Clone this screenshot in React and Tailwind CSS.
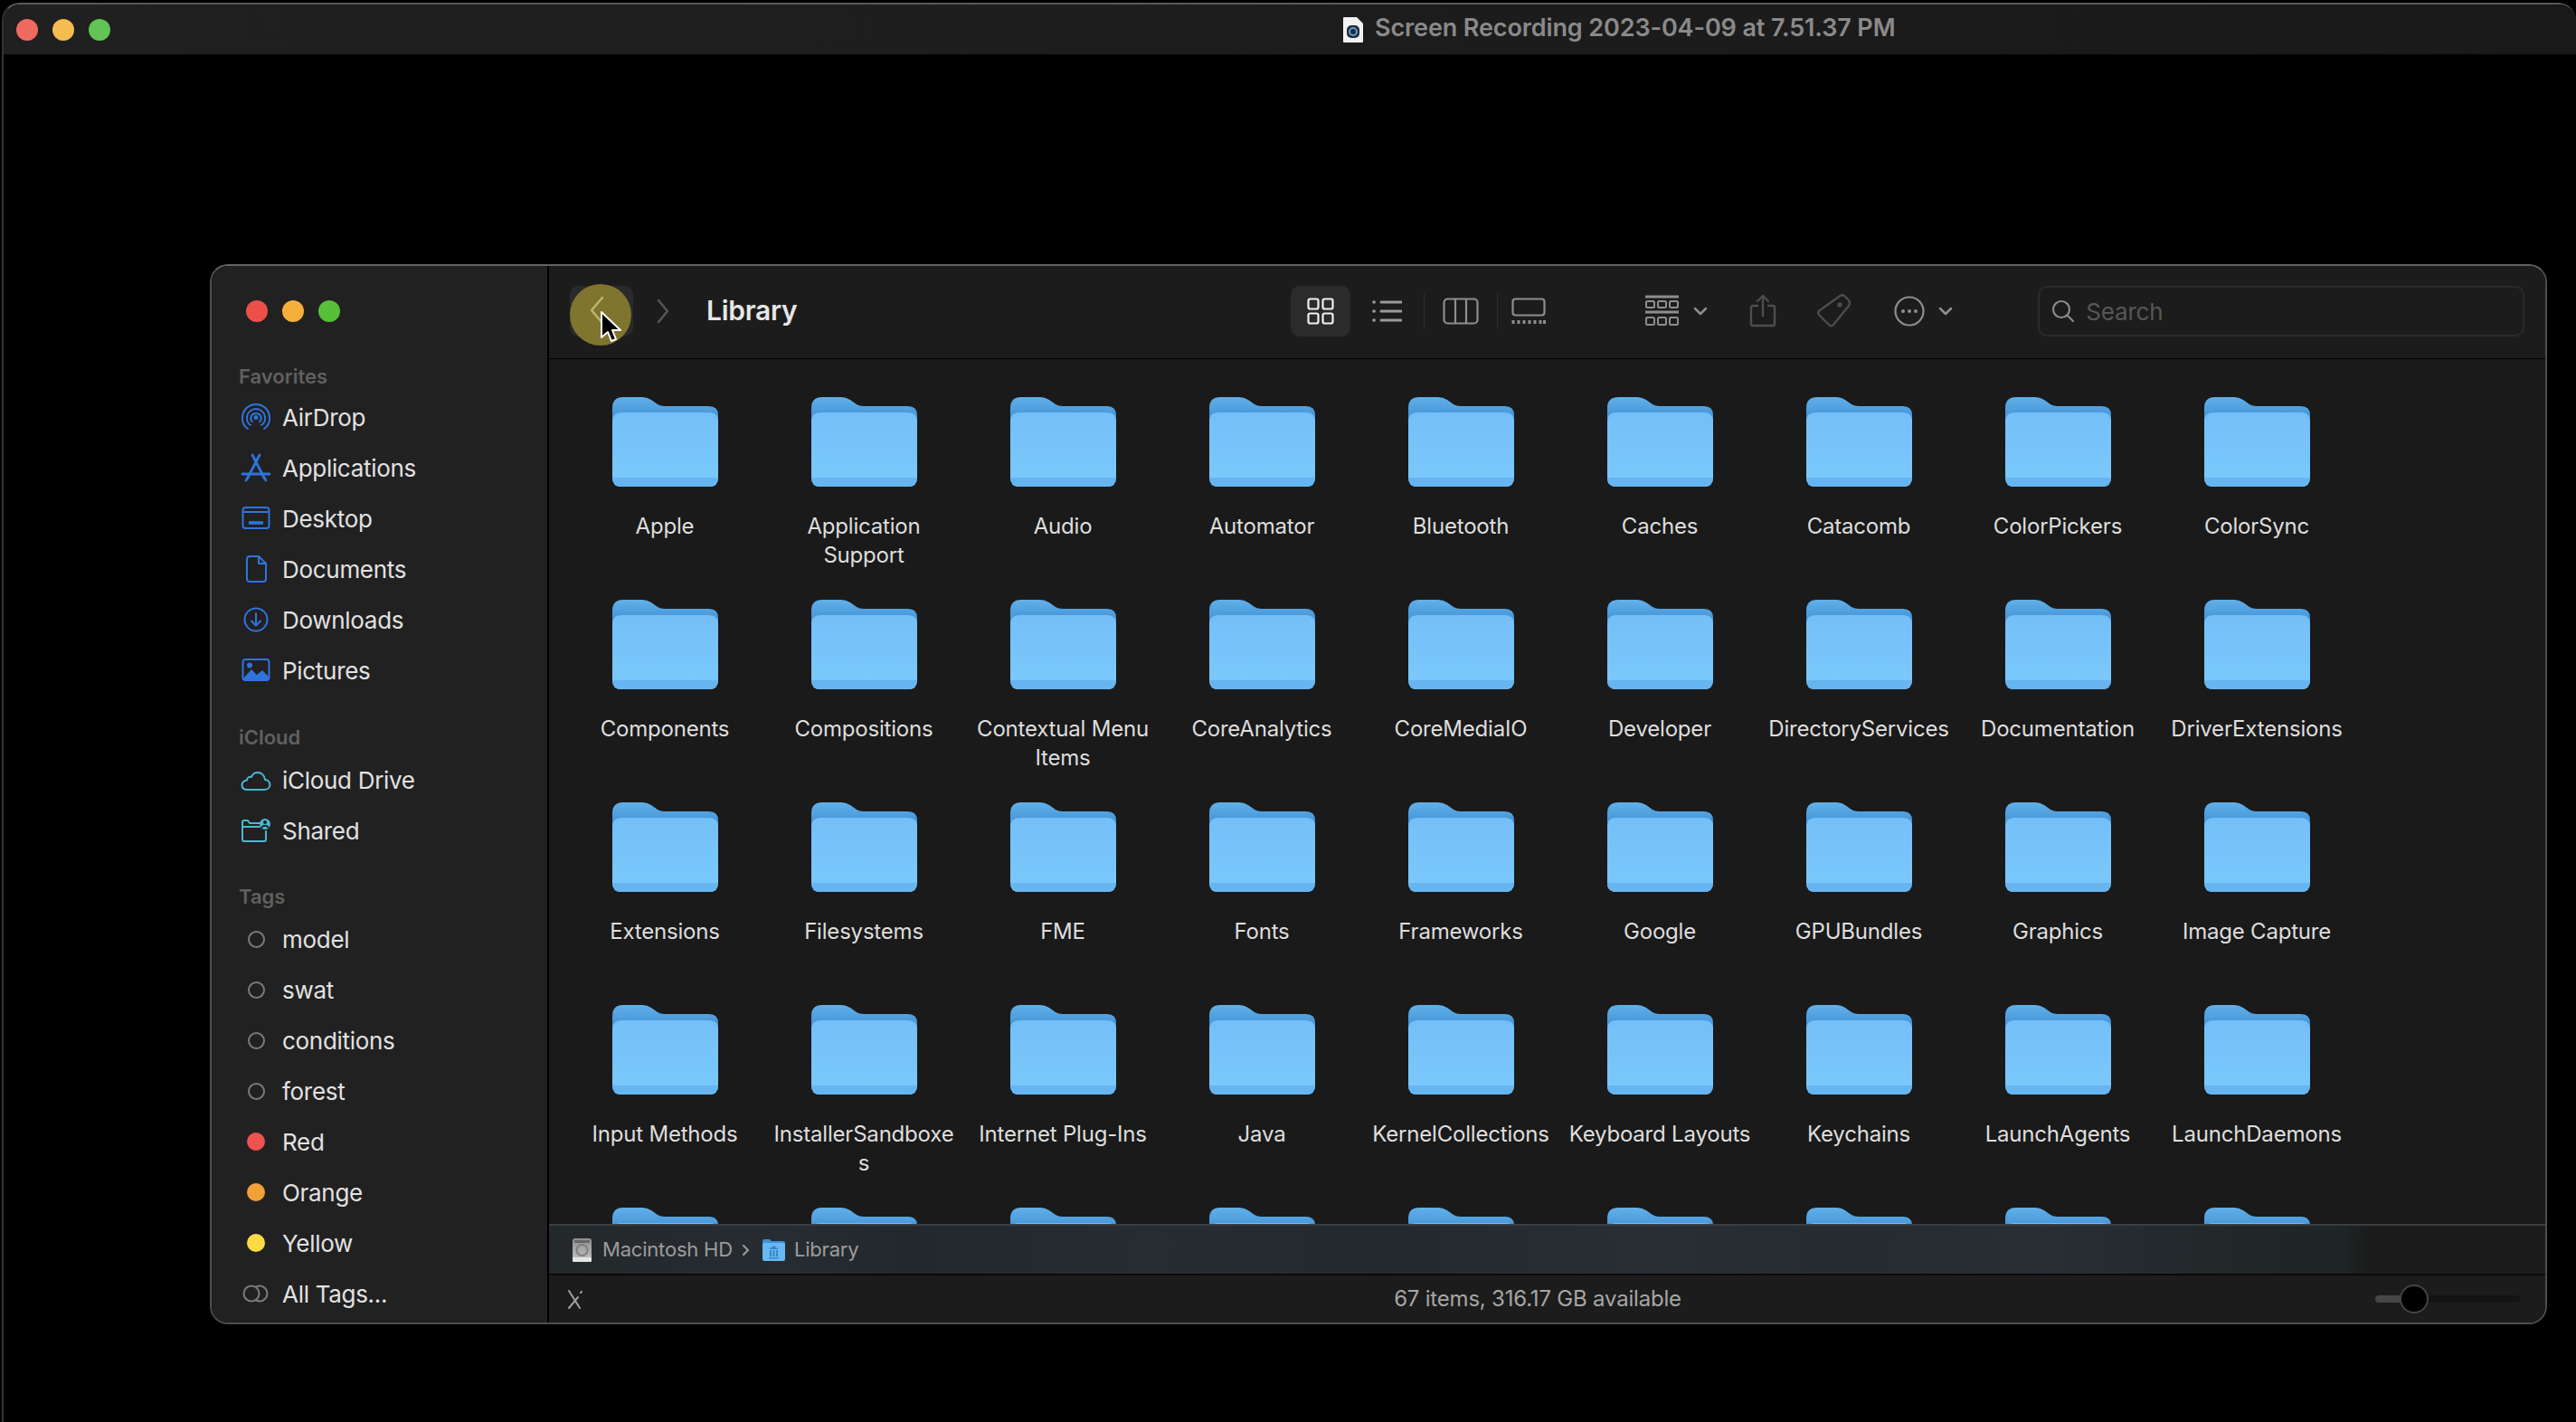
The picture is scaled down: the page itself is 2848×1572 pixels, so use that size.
const FONT = "font-['Inter','Liberation_Sans',sans-serif]";

const rows = [
  ["Apple", "Application\nSupport", "Audio", "Automator", "Bluetooth", "Caches", "Catacomb", "ColorPickers", "ColorSync"],
  ["Components", "Compositions", "Contextual Menu\nItems", "CoreAnalytics", "CoreMediaIO", "Developer", "DirectoryServices", "Documentation", "DriverExtensions"],
  ["Extensions", "Filesystems", "FME", "Fonts", "Frameworks", "Google", "GPUBundles", "Graphics", "Image Capture"],
  ["Input Methods", "InstallerSandboxe\ns", "Internet Plug-Ins", "Java", "KernelCollections", "Keyboard Layouts", "Keychains", "LaunchAgents", "LaunchDaemons"],
  ["", "", "", "", "", "", "", "", ""],
];

function Folder() {
  return (
    <svg width="117" height="99" viewBox="0 0 117 99" className="block">
      <defs>
        <linearGradient id="fb" x1="0" y1="0" x2="0" y2="1">
          <stop offset="0" stopColor="#62b0e8" />
          <stop offset="0.45" stopColor="#4394d8" />
          <stop offset="1" stopColor="#4394d8" />
        </linearGradient>
        <linearGradient id="ff" x1="0" y1="0" x2="0" y2="1">
          <stop offset="0" stopColor="#74bff7" />
          <stop offset="1" stopColor="#7bc9fd" />
        </linearGradient>
      </defs>
      <path d="M0 12Q0 0 12 0H33Q38 0 43 3L50 8Q53 10 58 10H107Q117 10 117 20V50H0Z" fill="url(#fb)" />
      <path d="M0 27Q0 17 10 17H107Q117 17 117 27V89Q117 99 107 99H10Q0 99 0 89Z" fill="url(#ff)" />
      <path d="M0 89H117Q117 99 107 99H10Q0 99 0 89Z" fill="#66b5f0" />
    </svg>
  );
}

function FolderCell({ name }) {
  return (
    <div className="flex h-[224px] w-[220px] flex-col items-center">
      <Folder />
      <div className="mt-[28px] whitespace-pre text-center text-[24px] leading-[32px] tracking-[-0.2px] text-[#dedede]">{name}</div>
    </div>
  );
}

const B = "#2f74dc";
const C = "#4db6d2";
const sv = { width: 36, height: 36, viewBox: "0 0 36 36", fill: "none", strokeLinecap: "round", strokeLinejoin: "round" };

const IconAirDrop = () => (
  <svg {...sv} stroke={B} strokeWidth="2">
    <path d="M9 31C4.500 28 2.500 23.500 3 18C3.500 10 10 4 18 4S32.500 10 33 18C33.500 23.500 31.500 28 27 31" />
    <path d="M12 27C9 25 7.500 21.500 8 18C8.500 13 13 9 18 9S27.500 13 28 18C28.500 21.500 27 25 24 27" />
    <path d="M14 23C12.500 22 12 20 12.500 18C13 15.500 15.500 14 18 14S23 15.500 23.500 18C24 20 23.500 22 22 23" />
    <circle cx="18" cy="18.500" r="1.500" fill={B} />
  </svg>
);
const IconApps = () => (
  <svg {...sv} stroke={B} strokeWidth="2.800">
    <path d="M14 4L27 29M22 4L9 29" />
    <path d="M3 25H33" />
    <path d="M7 32L9 29M29 32L27 29" />
  </svg>
);
const IconDesktop = () => (
  <svg {...sv} stroke={B} strokeWidth="2">
    <rect x="3.500" y="6" width="29" height="23" rx="3" />
    <path d="M4 11H32" />
    <path d="M10 23H26" strokeWidth="3.600" strokeLinecap="butt" />
  </svg>
);
const IconDoc = () => (
  <svg {...sv} stroke={B} strokeWidth="2">
    <path d="M11 4H21L29 12V29Q29 32 26 32H11Q8 32 8 29V7Q8 4 11 4Z" />
    <path d="M21 4V12H29" />
  </svg>
);
const IconDown = () => (
  <svg {...sv} stroke={B} strokeWidth="2">
    <circle cx="18" cy="18" r="12.500" />
    <path d="M18 11V24M13 19.500L18 24.500L23 19.500" />
  </svg>
);
const IconPics = () => (
  <svg {...sv}>
    <rect x="3.500" y="6" width="29" height="23" rx="3" stroke={B} strokeWidth="2" />
    <path d="M4 27L13 17L19 23L25 18L32 25V29H4Z" fill={B} />
    <circle cx="11" cy="12.500" r="3" fill={B} />
  </svg>
);
const IconCloud = () => (
  <svg {...sv} stroke={C} strokeWidth="2">
    <path d="M9 29H27C31 29 33.500 26.500 33.500 23.500C33.500 20.500 31 18 28 18C27.500 13 24 10 20 10C16.500 10 14 12 13 15C11 14 8 15.500 8 18.500C5 19 2.500 21 2.500 24C2.500 27 5 29 9 29Z" />
  </svg>
);
const IconShared = () => (
  <svg {...sv} stroke={C} strokeWidth="2">
    <path d="M24 10H11L9 7H5Q3 7 3 9V28Q3 30 5 30H27Q29 30 29 28V19" />
    <path d="M3 14H22" />
    <circle cx="28" cy="11" r="6" fill={C} stroke="none" />
    <circle cx="28" cy="9" r="2" fill="#212121" stroke="none" />
    <path d="M24.500 14.500Q28 11 31.500 14.500" stroke="#212121" strokeWidth="2" />
  </svg>
);
const IconAllTags = () => (
  <svg {...sv} stroke="#7c7c7c" strokeWidth="2">
    <circle cx="22" cy="18" r="8.500" />
    <circle cx="13" cy="18" r="8.500" fill="#212121" />
  </svg>
);

const Dot = ({ c }) => <span className={"h-[20px] w-[20px] rounded-full " + c} />;
const Ring = () => <span className="h-[19px] w-[19px] rounded-full border-2 border-[#7a7a7a]" />;

function Item({ icon, label }) {
  return (
    <div className="flex h-[56px] items-center">
      <span className="flex w-[78px] justify-center pl-[20px]">{icon}</span>
      <span className="text-[26px] tracking-[-0.3px] text-[#e2e2e2]">{label}</span>
    </div>
  );
}

function Lights({ a, b, c }) {
  return (
    <div className="flex items-center gap-[16px]">
      <span className={"h-[24px] w-[24px] rounded-full " + a} />
      <span className={"h-[24px] w-[24px] rounded-full " + b} />
      <span className={"h-[24px] w-[24px] rounded-full " + c} />
    </div>
  );
}

function Sidebar() {
  return (
    <aside className="flex w-[371px] shrink-0 flex-col bg-[#212121]">
      <div className="flex h-[100px] items-center pl-[38px]">
        <Lights a="bg-[#ec4f47]" b="bg-[#f4b03a]" c="bg-[#57bf38]" />
      </div>
      <div className="flex h-[39px] items-center pl-[30px] pt-[5px] text-[22px] font-semibold text-[#606060]">Favorites</div>
      <Item icon={<IconAirDrop />} label="AirDrop" />
      <Item icon={<IconApps />} label="Applications" />
      <Item icon={<IconDesktop />} label="Desktop" />
      <Item icon={<IconDoc />} label="Documents" />
      <Item icon={<IconDown />} label="Downloads" />
      <Item icon={<IconPics />} label="Pictures" />
      <div className="flex h-[65px] items-center pl-[30px] pt-[27px] text-[22px] font-semibold text-[#606060]">iCloud</div>
      <Item icon={<IconCloud />} label="iCloud Drive" />
      <Item icon={<IconShared />} label="Shared" />
      <div className="flex h-[64px] items-center pl-[30px] pt-[26px] text-[22px] font-semibold text-[#606060]">Tags</div>
      <Item icon={<Ring />} label="model" />
      <Item icon={<Ring />} label="swat" />
      <Item icon={<Ring />} label="conditions" />
      <Item icon={<Ring />} label="forest" />
      <Item icon={<Dot c="bg-[#ef5350]" />} label="Red" />
      <Item icon={<Dot c="bg-[#f2a03a]" />} label="Orange" />
      <Item icon={<Dot c="bg-[#fddb46]" />} label="Yellow" />
      <Item icon={<IconAllTags />} label="All Tags..." />
    </aside>
  );
}

const Chevron = ({ className }) => (
  <svg width="18" height="10" viewBox="0 0 18 10" fill="none" stroke="#8e8e8e" strokeWidth="2.500" strokeLinecap="round" strokeLinejoin="round" className={className}>
    <path d="M3 2L9 8L15 2" />
  </svg>
);

function Toolbar() {
  return (
    <header className="relative flex h-[103px] shrink-0 items-center border-b border-black bg-[#1c1c1c] pb-[3px]">
      {/* back */}
      <div className="relative ml-[23px] flex h-[56px] w-[70px] items-center justify-center rounded-[10px] bg-[#2a2a2a]">
        <span className="absolute -top-[2px] left-[0px] h-[68px] w-[68px] rounded-full bg-[#7f752f]" />
        <svg width="24" height="36" viewBox="0 0 24 36" fill="none" stroke="#bdb56f" strokeWidth="2.500" strokeLinecap="round" strokeLinejoin="round" className="relative -top-[1px] -ml-[8px]">
          <path d="M17 4L5 18L17 32" />
        </svg>
        <svg width="28" height="38" viewBox="0 0 28 38" className="absolute left-[32px] top-[27px]">
          <path d="M3 2V30L10 24L14 34L19 32L15 22L24 22Z" fill="#000" stroke="#fff" strokeWidth="2" strokeLinejoin="round" />
        </svg>
      </div>
      {/* forward */}
      <svg width="18" height="30" viewBox="0 0 18 30" fill="none" stroke="#565656" strokeWidth="2.500" strokeLinecap="round" strokeLinejoin="round" className="ml-[24px]">
        <path d="M4 3L14 15L4 27" />
      </svg>
      <span className="ml-[39px] text-[30px] font-semibold tracking-[-0.3px] text-[#e6e6e6]">Library</span>

      {/* view switcher */}
      <div className="ml-[546px] flex h-[56px] w-[66px] items-center justify-center rounded-[10px] bg-[#2b2b2b]">
        <svg width="30" height="30" viewBox="0 0 30 30" fill="none" stroke="#f0f0f0" strokeWidth="2.200">
          <rect x="1.500" y="1.500" width="11" height="11" rx="2" />
          <rect x="17.500" y="1.500" width="11" height="11" rx="2" />
          <rect x="1.500" y="17.500" width="11" height="11" rx="2" />
          <rect x="17.500" y="17.500" width="11" height="11" rx="2" />
        </svg>
      </div>
      <svg width="33" height="24" viewBox="0 0 33 24" fill="none" stroke="#9a9a9a" strokeWidth="3" strokeLinecap="round" className="ml-[24px]">
        <path d="M10 2H32M10 12H32M10 22H32" />
        <path d="M2 2H2.100M2 12H2.100M2 22H2.100" strokeWidth="3.600" />
      </svg>
      <span className="ml-[24px] h-[40px] w-px bg-[#2c2c2c]" />
      <svg width="40" height="30" viewBox="0 0 40 30" fill="none" stroke="#8e8e8e" strokeWidth="2.200" className="ml-[20px]">
        <rect x="1.500" y="1.500" width="37" height="27" rx="4" />
        <path d="M14 2V28M26 2V28" />
      </svg>
      <span className="ml-[20px] h-[40px] w-px bg-[#2c2c2c]" />
      <svg width="38" height="30" viewBox="0 0 38 30" fill="none" stroke="#8e8e8e" strokeWidth="2.200" className="ml-[15px]">
        <rect x="1.500" y="1.500" width="35" height="18" rx="3" />
        <path d="M2 25V29M8 25V29M14 25V29M20 25V29M26 25V29M32 25V29M36.500 25V29" strokeWidth="3" />
      </svg>

      {/* group */}
      <svg width="37" height="35" viewBox="0 0 37 35" fill="none" stroke="#8e8e8e" strokeWidth="2" className="ml-[110px]">
        <path d="M0 2H37M0 19H37" strokeWidth="3" />
        <rect x="1" y="7" width="9" height="7" rx="1.500" /><rect x="14" y="7" width="9" height="7" rx="1.500" /><rect x="27" y="7" width="9" height="7" rx="1.500" />
        <rect x="1" y="25" width="9" height="8" rx="1.500" /><rect x="14" y="25" width="9" height="8" rx="1.500" /><rect x="27" y="25" width="9" height="8" rx="1.500" />
      </svg>
      <Chevron className="ml-[15px]" />
      {/* share */}
      <svg width="30" height="37" viewBox="0 0 30 37" fill="none" stroke="#4d4d4d" strokeWidth="2.400" strokeLinecap="round" strokeLinejoin="round" className="ml-[45px]">
        <path d="M9 13H4Q2 13 2 15V33Q2 35 4 35H26Q28 35 28 33V15Q28 13 26 13H21" />
        <path d="M15 24V2M9 8L15 2L21 8" />
      </svg>
      {/* tag */}
      <svg width="38" height="37" viewBox="0 0 38 37" fill="none" stroke="#4d4d4d" strokeWidth="2.400" strokeLinejoin="round" className="ml-[45px]">
        <path d="M24 3Q27 0 30 2L35 7Q37 10 35 13L18 34Q16 36 14 35L2 23Q0 20 3 18Z" />
        <circle cx="25" cy="12" r="1.500" fill="#4d4d4d" />
      </svg>
      {/* more */}
      <svg width="34" height="34" viewBox="0 0 34 34" fill="none" stroke="#8e8e8e" strokeWidth="2.200" className="ml-[47px]">
        <circle cx="17" cy="17" r="15.500" />
        <circle cx="10" cy="17" r="2" fill="#8e8e8e" stroke="none" />
        <circle cx="17" cy="17" r="2" fill="#8e8e8e" stroke="none" />
        <circle cx="24" cy="17" r="2" fill="#8e8e8e" stroke="none" />
      </svg>
      <Chevron className="ml-[14px]" />
      {/* search */}
      <div className="ml-[93px] flex h-[56px] w-[538px] items-center rounded-[10px] border-2 border-[#2b2b2b] pl-[13px]">
        <svg width="26" height="26" viewBox="0 0 26 26" fill="none" stroke="#8a8a8a" strokeWidth="2.200" strokeLinecap="round">
          <circle cx="11" cy="11" r="9" />
          <path d="M17.500 17.500L24 24" />
        </svg>
        <span className="relative top-[1px] ml-[12px] text-[26px] tracking-[-0.2px] text-[#575757]">Search</span>
      </div>
    </header>
  );
}

function PathBar() {
  return (
    <div className="flex h-[57px] shrink-0 items-center border-t-2 border-b-2 border-t-[#3a3f43] border-b-[#0a0a0a] bg-[linear-gradient(90deg,#23282b_0%,#262c30_12%,#23282c_18%,#262c31_30%,#24292d_42%,#282e33_55%,#252b2f_65%,#282e33_75%,#21282a_84%,#1f2426_90%,#1c1c1c_91%)] pl-[24px] text-[22px] tracking-[-0.2px] text-[#9c9c9c]">
      <svg width="25" height="26" viewBox="0 0 25 26">
        <defs>
          <linearGradient id="hd" x1="0" y1="0" x2="0" y2="1">
            <stop offset="0" stopColor="#8f8f8f" />
            <stop offset="1" stopColor="#c4c4c4" />
          </linearGradient>
        </defs>
        <rect x="2" y="0" width="21" height="26" rx="3" fill="url(#hd)" />
        <rect x="4" y="2" width="17" height="3" fill="#666" />
        <circle cx="12.500" cy="13" r="6" fill="none" stroke="#808080" strokeWidth="2" />
        <rect x="2" y="21" width="21" height="5" rx="1" fill="#e6e6e6" />
      </svg>
      <span className="ml-[10px]">Macintosh HD</span>
      <svg width="10" height="16" viewBox="0 0 10 16" fill="none" stroke="#9c9c9c" strokeWidth="2" strokeLinecap="round" className="ml-[10px]">
        <path d="M2 3L7 8L2 13" />
      </svg>
      <svg width="25" height="25" viewBox="0 0 25 25" className="ml-[13px]">
        <path d="M0 3Q0 1 2 1H8L10 3H23Q25 3 25 5V8H0Z" fill="#3f8fd4" />
        <rect x="0" y="5" width="25" height="20" rx="2" fill="#67b9f4" />
        <path d="M12.500 8L18 12H7ZM8 13H10V20H8ZM11.500 13H13.500V20H11.500ZM15 13H17V20H15ZM7 21H18V22.500H7Z" fill="#3a86c8" />
      </svg>
      <span className="ml-[10px]">Library</span>
    </div>
  );
}

function StatusBar() {
  return (
    <div className="flex h-[52px] shrink-0 items-center bg-[#1c1c1c] pl-[19px]">
      <svg width="20" height="22" viewBox="0 0 20 22" fill="none" stroke="#a0a0a0" strokeWidth="2" strokeLinecap="round">
        <path d="M3 2L15 21M13 9L3 21M16 4L17 3" />
      </svg>
      <span className="ml-[889px] w-[330px] whitespace-nowrap text-center text-[24px] tracking-[-0.2px] text-[#a6a6a6]">67 items, 316.17 GB available</span>
      <div className="relative ml-[761px] flex h-[8px] w-[160px] rounded-full bg-[#141414]">
        <span className="h-full w-[44px] rounded-l-full bg-[#474747]" />
        <span className="absolute -top-[12px] left-[27px] h-[32px] w-[32px] rounded-full border-2 border-[#444] bg-black" />
      </div>
    </div>
  );
}

function Finder() {
  return (
    <div className="ml-[228px] mt-[232px] flex h-[1172px] w-[2584px] overflow-hidden rounded-[20px] border-2 border-[#4d4d4d] border-t-[#636363]">
      <Sidebar />
      <main className="flex min-w-0 flex-1 flex-col border-l-2 border-black bg-[#1a1a1a]">
        <Toolbar />
        <div className="min-h-0 flex-1 overflow-hidden pl-[18px] pt-[42px]">
          <div className="grid grid-cols-[repeat(9,220px)]">
            {rows.flat().map((n, i) => <FolderCell key={i} name={n} />)}
          </div>
        </div>
        <PathBar />
        <StatusBar />
      </main>
    </div>
  );
}

export default function App() {
  return (
    <div className={"h-[1572px] w-[2848px] overflow-hidden bg-black pl-[2px] pt-[3px] " + FONT}>
      <div className="h-[1569px] rounded-tl-[20px] rounded-tr-[20px] border-l-2 border-t-2 border-l-[#333] border-t-[#5a5a5a]">
        <div className="flex h-[55px] items-center rounded-tl-[18px] rounded-tr-[18px] bg-[linear-gradient(90deg,#202020,#191919)] pl-[14px]">
          <Lights a="bg-[#ee6a5f]" b="bg-[#f5bd4f]" c="bg-[#61c454]" />
          <svg width="22" height="28" viewBox="0 0 22 28" className="ml-[1363px]">
            <path d="M0 1Q0 0 1 0H15L22 7V27Q22 28 21 28H1Q0 28 0 27Z" fill="#f2f2f2" />
            <rect x="4" y="9" width="14" height="14" rx="5" fill="#262c34" />
            <circle cx="11" cy="16" r="4" fill="none" stroke="#4f9fe0" strokeWidth="2" />
          </svg>
          <span className="relative -top-[1px] ml-[13px] whitespace-nowrap text-[27px] font-semibold tracking-[-0.12px] text-[#8a8a8a]">Screen Recording 2023-04-09 at 7.51.37 PM</span>
        </div>
        <Finder />
      </div>
    </div>
  );
}
